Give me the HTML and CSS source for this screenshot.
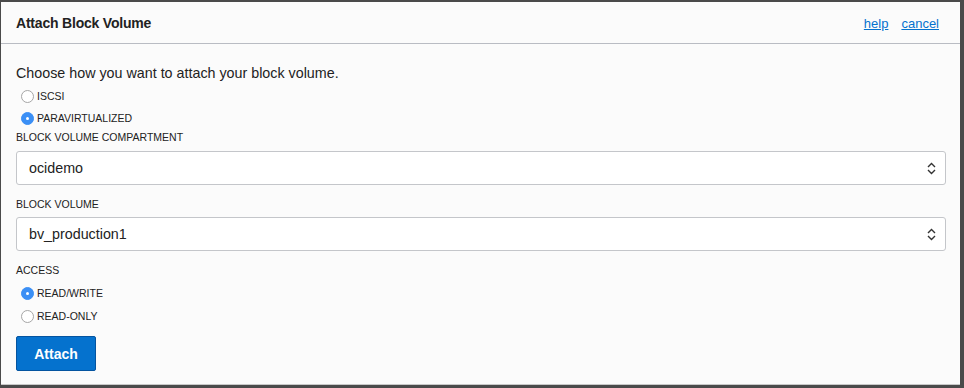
FILE: index.html
```html
<!DOCTYPE html>
<html lang="en">
<head>
    <meta charset="UTF-8">
    <title>Attach Block Volume</title>
    <link rel="stylesheet" href="styles.css">
</head>
<body>
    <div class="dialog">
        <div class="dialog-header">
            <h1>Attach Block Volume</h1>
            <div class="header-links">
                <a href="#">help</a>
                <a href="#">cancel</a>
            </div>
        </div>
        <div class="dialog-body">
            <p class="intro">Choose how you want to attach your block volume.</p>
            <label class="radio first"><span class="dot"></span>ISCSI</label>
            <label class="radio checked gap4"><span class="dot"></span>PARAVIRTUALIZED</label>

            <div class="field-label compartment">BLOCK VOLUME COMPARTMENT</div>
            <div class="select">
                <span>ocidemo</span>
                <svg width="9" height="13" viewBox="0 0 9 13"><path d="M1 5 L4.5 1.5 L8 5 M1 8 L4.5 11.5 L8 8" fill="none" stroke="#333" stroke-width="1.4"/></svg>
            </div>

            <div class="field-label">BLOCK VOLUME</div>
            <div class="select">
                <span>bv_production1</span>
                <svg width="9" height="13" viewBox="0 0 9 13"><path d="M1 5 L4.5 1.5 L8 5 M1 8 L4.5 11.5 L8 8" fill="none" stroke="#333" stroke-width="1.4"/></svg>
            </div>

            <div class="field-label">ACCESS</div>
            <label class="radio checked access"><span class="dot"></span>READ/WRITE</label>
            <label class="radio gap5"><span class="dot"></span>READ-ONLY</label>

            <button class="btn-primary">Attach</button>
        </div>
    </div>
</body>
</html>
```

FILE: styles.css
```css
body {
    margin: 0;
    background-color: #4a4a4a;
    font-family: "Liberation Sans", Arial, sans-serif;
    color: #333;
    height: 388px;
    overflow: hidden;
}
.dialog {
    margin: 2px 0 0 1px;
    width: 959px;
    height: 383px;
    background-color: #fbfbfb;
    border-bottom: 1px solid #c8c8c8;
    box-sizing: border-box;
}
.dialog-header {
    display: flex;
    align-items: center;
    justify-content: space-between;
    height: 41px;
    padding: 0 21px 0 15px;
    border-bottom: 1px solid #b9bcc3;
}
.dialog-header h1 {
    margin: 0;
    font-size: 14px;
    font-weight: bold;
    color: #222;
    letter-spacing: -0.2px;
}
.header-links {
    display: flex;
    gap: 13px;
    padding-top: 1px;
}
.header-links a {
    color: #0572ce;
    font-size: 13px;
}
.dialog-body {
    padding: 20px 14px 0 15px;
}
.intro {
    margin: 0;
    font-size: 14.3px;
    line-height: 18px;
    color: #222;
}
.radio {
    display: flex;
    align-items: center;
    height: 18px;
    font-size: 10.5px;
    color: #222;
    padding-left: 5px;
}
.radio.first {
    margin-top: 5px;
}
.radio.gap4 {
    margin-top: 4px;
}
.radio.gap5 {
    margin-top: 5px;
}
.radio.access {
    margin-top: 6px;
}
.dot {
    width: 13px;
    height: 13px;
    border-radius: 50%;
    border: 1px solid #a6a6a6;
    background: #fff;
    box-sizing: border-box;
    margin-right: 3px;
    position: relative;
}
.radio.checked .dot {
    background: #3b8ff5;
    border-color: #3b8ff5;
}
.radio.checked .dot::after {
    content: "";
    position: absolute;
    left: 4px;
    top: 4px;
    width: 3px;
    height: 3px;
    border-radius: 50%;
    background: #fff;
}
.field-label {
    font-size: 10.5px;
    line-height: 16px;
    margin-top: 11px;
    color: #222;
}
.field-label.compartment {
    margin-top: 2px;
}
.select {
    display: flex;
    align-items: center;
    justify-content: space-between;
    box-sizing: border-box;
    height: 34px;
    margin-top: 5px;
    padding: 0 9px 0 12px;
    background: #fff;
    border: 1px solid #c4c6ca;
    border-radius: 3px;
    font-size: 14.3px;
    color: #222;
}
.compartment + .select {
    margin-top: 6px;
}
.btn-primary {
    display: block;
    margin-top: 11px;
    width: 80px;
    height: 35px;
    background: #0572ce;
    border: 1px solid #0454a0;
    border-radius: 2px;
    color: #fff;
    font-family: "Liberation Sans", Arial, sans-serif;
    font-size: 14px;
    font-weight: bold;
}
```
